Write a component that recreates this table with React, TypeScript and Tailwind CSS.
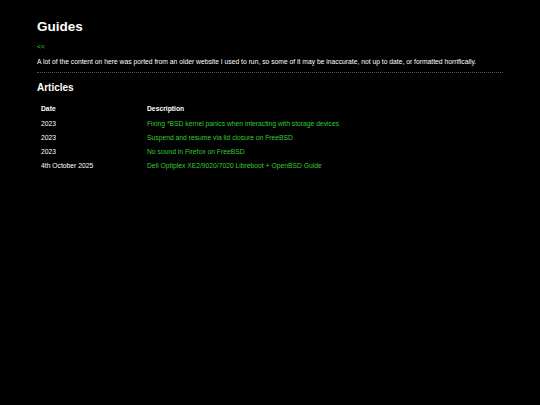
export default function App() {
  const articles = [
    { date: "2023", title: "Fixing *BSD kernel panics when interacting with storage devices" },
    { date: "2023", title: "Suspend and resume via lid closure on FreeBSD" },
    { date: "2023", title: "No sound in Firefox on FreeBSD" },
    { date: "4th October 2025", title: "Dell Optiplex XE2/9020/7020 Libreboot + OpenBSD Guide" },
  ]

  return (
    <div className="min-h-[405px] bg-black px-[37px] pt-[15px] text-[6.75px] text-white font-['Liberation_Sans',Arial,sans-serif]">
      <h1 className="text-[13.5px] font-bold leading-[24px]">Guides</h1>
      <a href="#" className="mt-[3px] block text-[#33cc33] leading-[10px]">&lt;&lt;</a>
      <p className="mt-[5px] leading-[10px]">
        A lot of the content on here was ported from an older website I used to run, so some of it may be inaccurate, not up to date, or formatted horrifically.
      </p>
      <hr className="mt-[5px] border-0 border-t border-dotted border-[#37702c]" />
      <h2 className="mt-[6px] text-[10px] font-bold leading-[18px]">Articles</h2>
      <table className="mt-[2px] border-separate border-spacing-x-[4px] border-spacing-y-[5px]">
        <thead>
          <tr>
            <th className="w-[102px] text-left font-bold leading-[9.6px]">Date</th>
            <th className="text-left font-bold leading-[9.6px]">Description</th>
          </tr>
        </thead>
        <tbody>
          {articles.map((a) => (
            <tr key={a.title}>
              <td className="leading-[9.3px]">{a.date}</td>
              <td className="leading-[9.3px]">
                <a href="#" className="text-[#33cc33]">{a.title}</a>
              </td>
            </tr>
          ))}
        </tbody>
      </table>
    </div>
  )
}
